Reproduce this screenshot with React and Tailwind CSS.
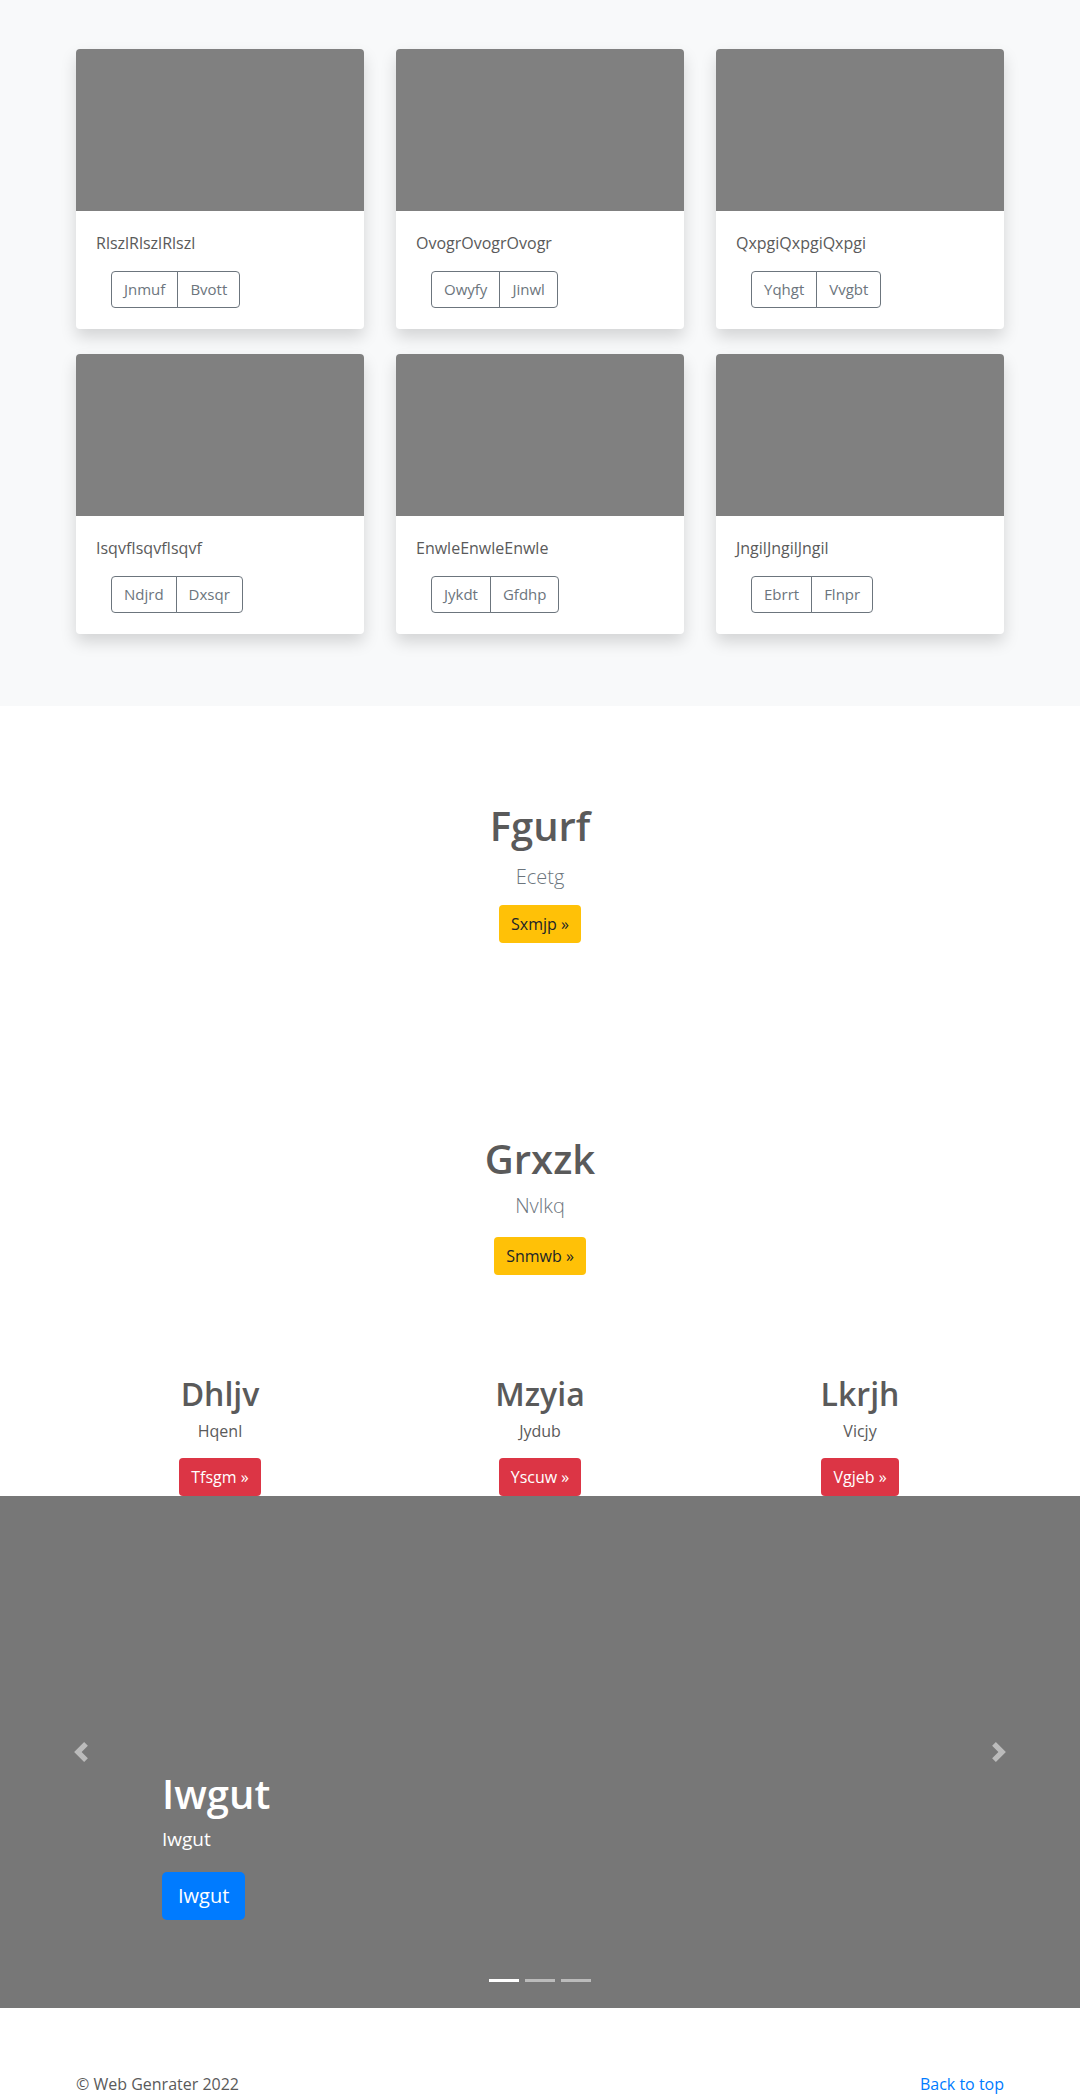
const cards = [
  { title: 'RlszlRlszlRlszl', a: 'Jnmuf', b: 'Bvott' },
  { title: 'OvogrOvogrOvogr', a: 'Owyfy', b: 'Jinwl' },
  { title: 'QxpgiQxpgiQxpgi', a: 'Yqhgt', b: 'Vvgbt' },
  { title: 'IsqvfIsqvfIsqvf', a: 'Ndjrd', b: 'Dxsqr' },
  { title: 'EnwleEnwleEnwle', a: 'Jykdt', b: 'Gfdhp' },
  { title: 'JngilJngilJngil', a: 'Ebrrt', b: 'Flnpr' },
]

const columns = [
  { title: 'Dhljv', text: 'Hqenl', cta: 'Tfsgm' },
  { title: 'Mzyia', text: 'Jydub', cta: 'Yscuw' },
  { title: 'Lkrjh', text: 'Vicjy', cta: 'Vgjeb' },
]

function Card({ title, a, b }) {
  return (
    <div className="overflow-hidden rounded bg-white shadow-[0_8px_16px_rgba(0,0,0,0.15)]">
      <div className="h-[162px] bg-[#808080]" />
      <div className="px-5 pt-5 pb-[21px]">
        <p className="text-base leading-6">{title}</p>
        <div className="mt-4 ml-[15px] inline-flex h-[37px] text-[15px] text-[#6c757d]">
          <button type="button" className="rounded-l border border-[#6c757d] px-3">
            {a}
          </button>
          <button type="button" className="-ml-px rounded-r border border-[#6c757d] px-3">
            {b}
          </button>
        </div>
      </div>
    </div>
  )
}

function Chevron({ flip }) {
  return (
    <svg viewBox="0 0 8 8" className={flip ? 'h-5 w-5 rotate-180' : 'h-5 w-5'} fill="#fff">
      <path d="M5.25 0l-4 4 4 4 1.5-1.5L4.25 4l2.5-2.5L5.25 0z" />
    </svg>
  )
}

export default function App() {
  return (
    <div className="min-h-[2096px] bg-white text-[#5a5a5a] font-['Open_Sans',sans-serif]">
      <section className="bg-[#f8f9fa] pt-[49px] pb-[72px]">
        <div className="mx-auto grid w-[928px] grid-cols-3 gap-x-8 gap-y-[25px]">
          {cards.map((card) => (
            <Card key={card.title} {...card} />
          ))}
        </div>
      </section>

      <section className="flex flex-col items-center pt-24 pb-24 text-center">
        <h1 className="text-[40px] leading-[48px] font-semibold">Fgurf</h1>
        <p className="mt-3 text-xl leading-[30px] font-light text-[#6c757d]">Ecetg</p>
        <button type="button" className="mt-[13px] h-[38px] rounded bg-[#ffc107] px-3 text-base text-[#212529]">
          Sxmjp »
        </button>
      </section>

      <section className="flex flex-col items-center pt-24 text-center">
        <h1 className="text-[40px] leading-[48px] font-semibold">Grxzk</h1>
        <p className="mt-2 text-xl leading-[30px] font-light text-[#6c757d]">Nvlkq</p>
        <button type="button" className="mt-4 h-[38px] rounded bg-[#ffc107] px-3 text-base text-[#212529]">
          Snmwb »
        </button>
      </section>

      <section className="mx-auto mt-[100px] grid w-[960px] grid-cols-3 text-center">
        {columns.map((col) => (
          <div key={col.title} className="flex flex-col items-center">
            <h2 className="text-[32px] leading-[38px] font-semibold">{col.title}</h2>
            <p className="mt-[6px] text-base leading-6">{col.text}</p>
            <button type="button" className="mt-[15px] h-[38px] rounded bg-[#dc3545] px-3 text-base text-white">
              {col.cta} »
            </button>
          </div>
        ))}
      </section>

      <section className="relative h-[512px] bg-[#777777]">
        <div className="absolute top-1/2 left-[71px] -translate-y-1/2 opacity-50">
          <Chevron />
        </div>
        <div className="absolute top-1/2 right-[71px] -translate-y-1/2 opacity-50">
          <Chevron flip />
        </div>
        <div className="absolute bottom-[88px] left-[162px] flex flex-col items-start text-white">
          <h1 className="text-[40px] leading-[48px] font-semibold">Iwgut</h1>
          <p className="mt-[7px] text-[19px] leading-[28px]">Iwgut</p>
          <button type="button" className="mt-[19px] h-12 rounded-[5px] bg-[#007bff] px-4 text-xl text-white">
            Iwgut
          </button>
        </div>
        <div className="absolute bottom-[26px] left-1/2 flex -translate-x-1/2 gap-[6px]">
          <span className="h-[3px] w-[30px] bg-white" />
          <span className="h-[3px] w-[30px] bg-white opacity-50" />
          <span className="h-[3px] w-[30px] bg-white opacity-50" />
        </div>
      </section>

      <footer className="mx-auto flex w-[928px] justify-between pt-16 text-base leading-6">
        <p>© Web Genrater 2022</p>
        <a href="#top" className="text-[#007bff]">Back to top</a>
      </footer>
    </div>
  )
}
